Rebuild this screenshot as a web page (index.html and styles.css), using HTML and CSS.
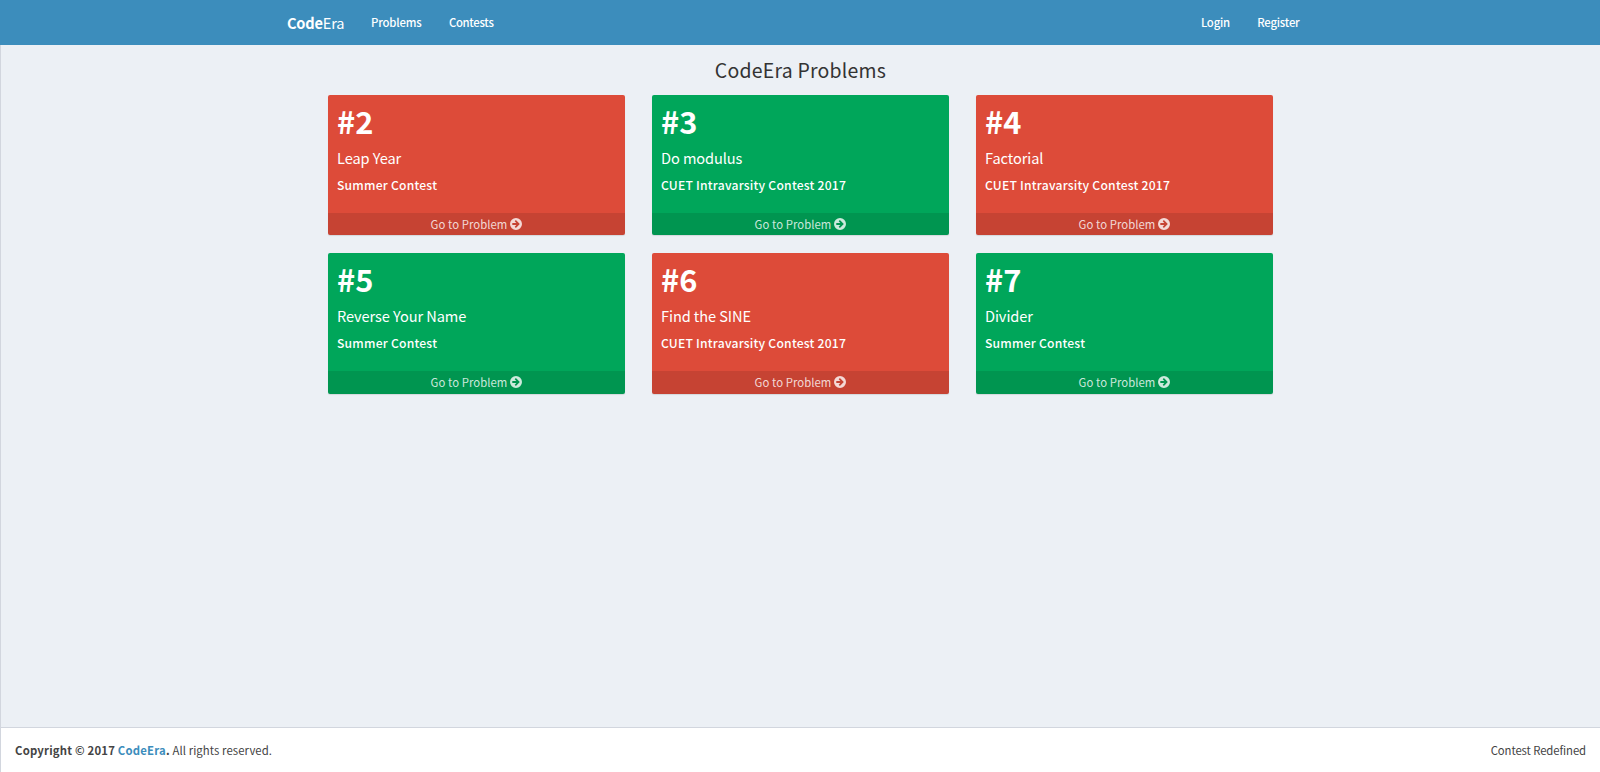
FILE: index.html
```html
<!DOCTYPE html>
<html lang="en">
<head>
<meta charset="utf-8">
<title>CodeEra Problems</title>
<link rel="stylesheet" href="styles.css">
</head>
<body>
<svg class="sprite" aria-hidden="true"><symbol id="go" viewBox="0 0 12 12"><path fill-rule="evenodd" d="M6 0a6 6 0 1 1 0 12A6 6 0 0 1 6 0ZM5.9 2.1 4.7 3.3 6.3 5H2.3V7H6.3L4.7 8.7 5.9 9.9 9.8 6Z"/></symbol></svg>
<header class="topbar">
  <div class="nav-inner">
    <a class="brand"><b>Code</b>Era</a>
    <nav class="links"><a>Problems</a><a class="contests">Contests</a></nav>
    <nav class="account"><a>Login</a><a>Register</a></nav>
  </div>
</header>
<main class="content">
  <h1 class="title">CodeEra Problems</h1>
  <div class="grid">
    <article class="card red"><div class="inner"><h2>#2</h2><h3>Leap Year</h3><p>Summer Contest</p></div><a class="more"><span>Go to Problem</span><svg><use href="#go"/></svg></a></article>
    <article class="card green"><div class="inner"><h2>#3</h2><h3>Do modulus</h3><p>CUET Intravarsity Contest 2017</p></div><a class="more"><span>Go to Problem</span><svg><use href="#go"/></svg></a></article>
    <article class="card red"><div class="inner"><h2>#4</h2><h3>Factorial</h3><p>CUET Intravarsity Contest 2017</p></div><a class="more"><span>Go to Problem</span><svg><use href="#go"/></svg></a></article>
    <article class="card green"><div class="inner"><h2>#5</h2><h3>Reverse Your Name</h3><p>Summer Contest</p></div><a class="more"><span>Go to Problem</span><svg><use href="#go"/></svg></a></article>
    <article class="card red"><div class="inner"><h2>#6</h2><h3>Find the SINE</h3><p>CUET Intravarsity Contest 2017</p></div><a class="more"><span>Go to Problem</span><svg><use href="#go"/></svg></a></article>
    <article class="card green"><div class="inner"><h2>#7</h2><h3>Divider</h3><p>Summer Contest</p></div><a class="more"><span>Go to Problem</span><svg><use href="#go"/></svg></a></article>
  </div>
</main>
<footer class="footer"><div class="copyright"><strong>Copyright © 2017 <a>CodeEra</a>.</strong> All rights reserved.</div><div class="tagline">Contest Redefined</div></footer>
</body>
</html>
```
FILE: styles.css
```css
* { box-sizing: border-box; margin: 0; }
body {
  display: flex;
  flex-direction: column;
  height: 772px;
  overflow: hidden;
  background: #ecf0f5;
  color: #333;
  font: 400 11.35px/18px "Source Sans Pro", "Noto Sans CJK JP", "Noto Sans", sans-serif;
}
.sprite { display: none; }
.topbar { flex: none; height: 45px; background: #3c8dbc; color: #fff; }
.nav-inner { display: flex; align-items: center; height: 45px; margin: 0 287px; }
.brand { width: 84px; font-size: 14.6px; letter-spacing: -.2px; }
.links, .account { display: flex; gap: 27.4px; padding-bottom: 2px; font-weight: 500; letter-spacing: -.18px; }
.contests { letter-spacing: -.3px; }
.account { margin-left: auto; padding-right: 13.5px; letter-spacing: -.22px; }
.content { flex: 1; border-left: 1px solid #d2d6de; padding: 13px 327px 0; }
.title { height: 37px; line-height: 24px; font-size: 19.45px; font-weight: 400; text-align: center; letter-spacing: .23px; }
.grid { display: grid; grid-template-columns: repeat(3, 297px); column-gap: 27px; row-gap: 18px; }
.card { height: 140.4px; border-radius: 2px; color: #fff; overflow: hidden; box-shadow: 0 1px 1px rgba(0, 0, 0, .1); }
.red { background: #dd4b39; }
.green { background: #00a65a; }
.inner { height: 118px; padding: 9px; }
.card h2 { font-size: 30.8px; line-height: 34px; font-weight: 700; }
.card h3 { margin-top: 10.5px; font-size: 14.6px; line-height: 18px; font-weight: 400; letter-spacing: -.09px; }
.card p { margin-top: 8px; font-size: 12.15px; line-height: 19px; font-weight: 500; letter-spacing: .22px; }
.more { display: flex; align-items: center; justify-content: center; gap: 3px; height: 22.4px; padding-bottom: .4px; background: rgba(0, 0, 0, .1); color: rgba(255, 255, 255, .8); letter-spacing: .05px; }
.more svg { width: 12px; height: 12px; fill: currentColor; }
.footer { flex: none; display: flex; justify-content: space-between; height: 45px; padding: 13px 14px 0 14px; border-top: 1px solid #d2d6de; border-left: 1px solid #d2d6de; background: #fff; color: #444; }
.copyright { letter-spacing: .09px; }
.copyright strong { letter-spacing: .19px; }
.tagline { letter-spacing: -.1px; }
.footer a { color: #3c8dbc; }
```
